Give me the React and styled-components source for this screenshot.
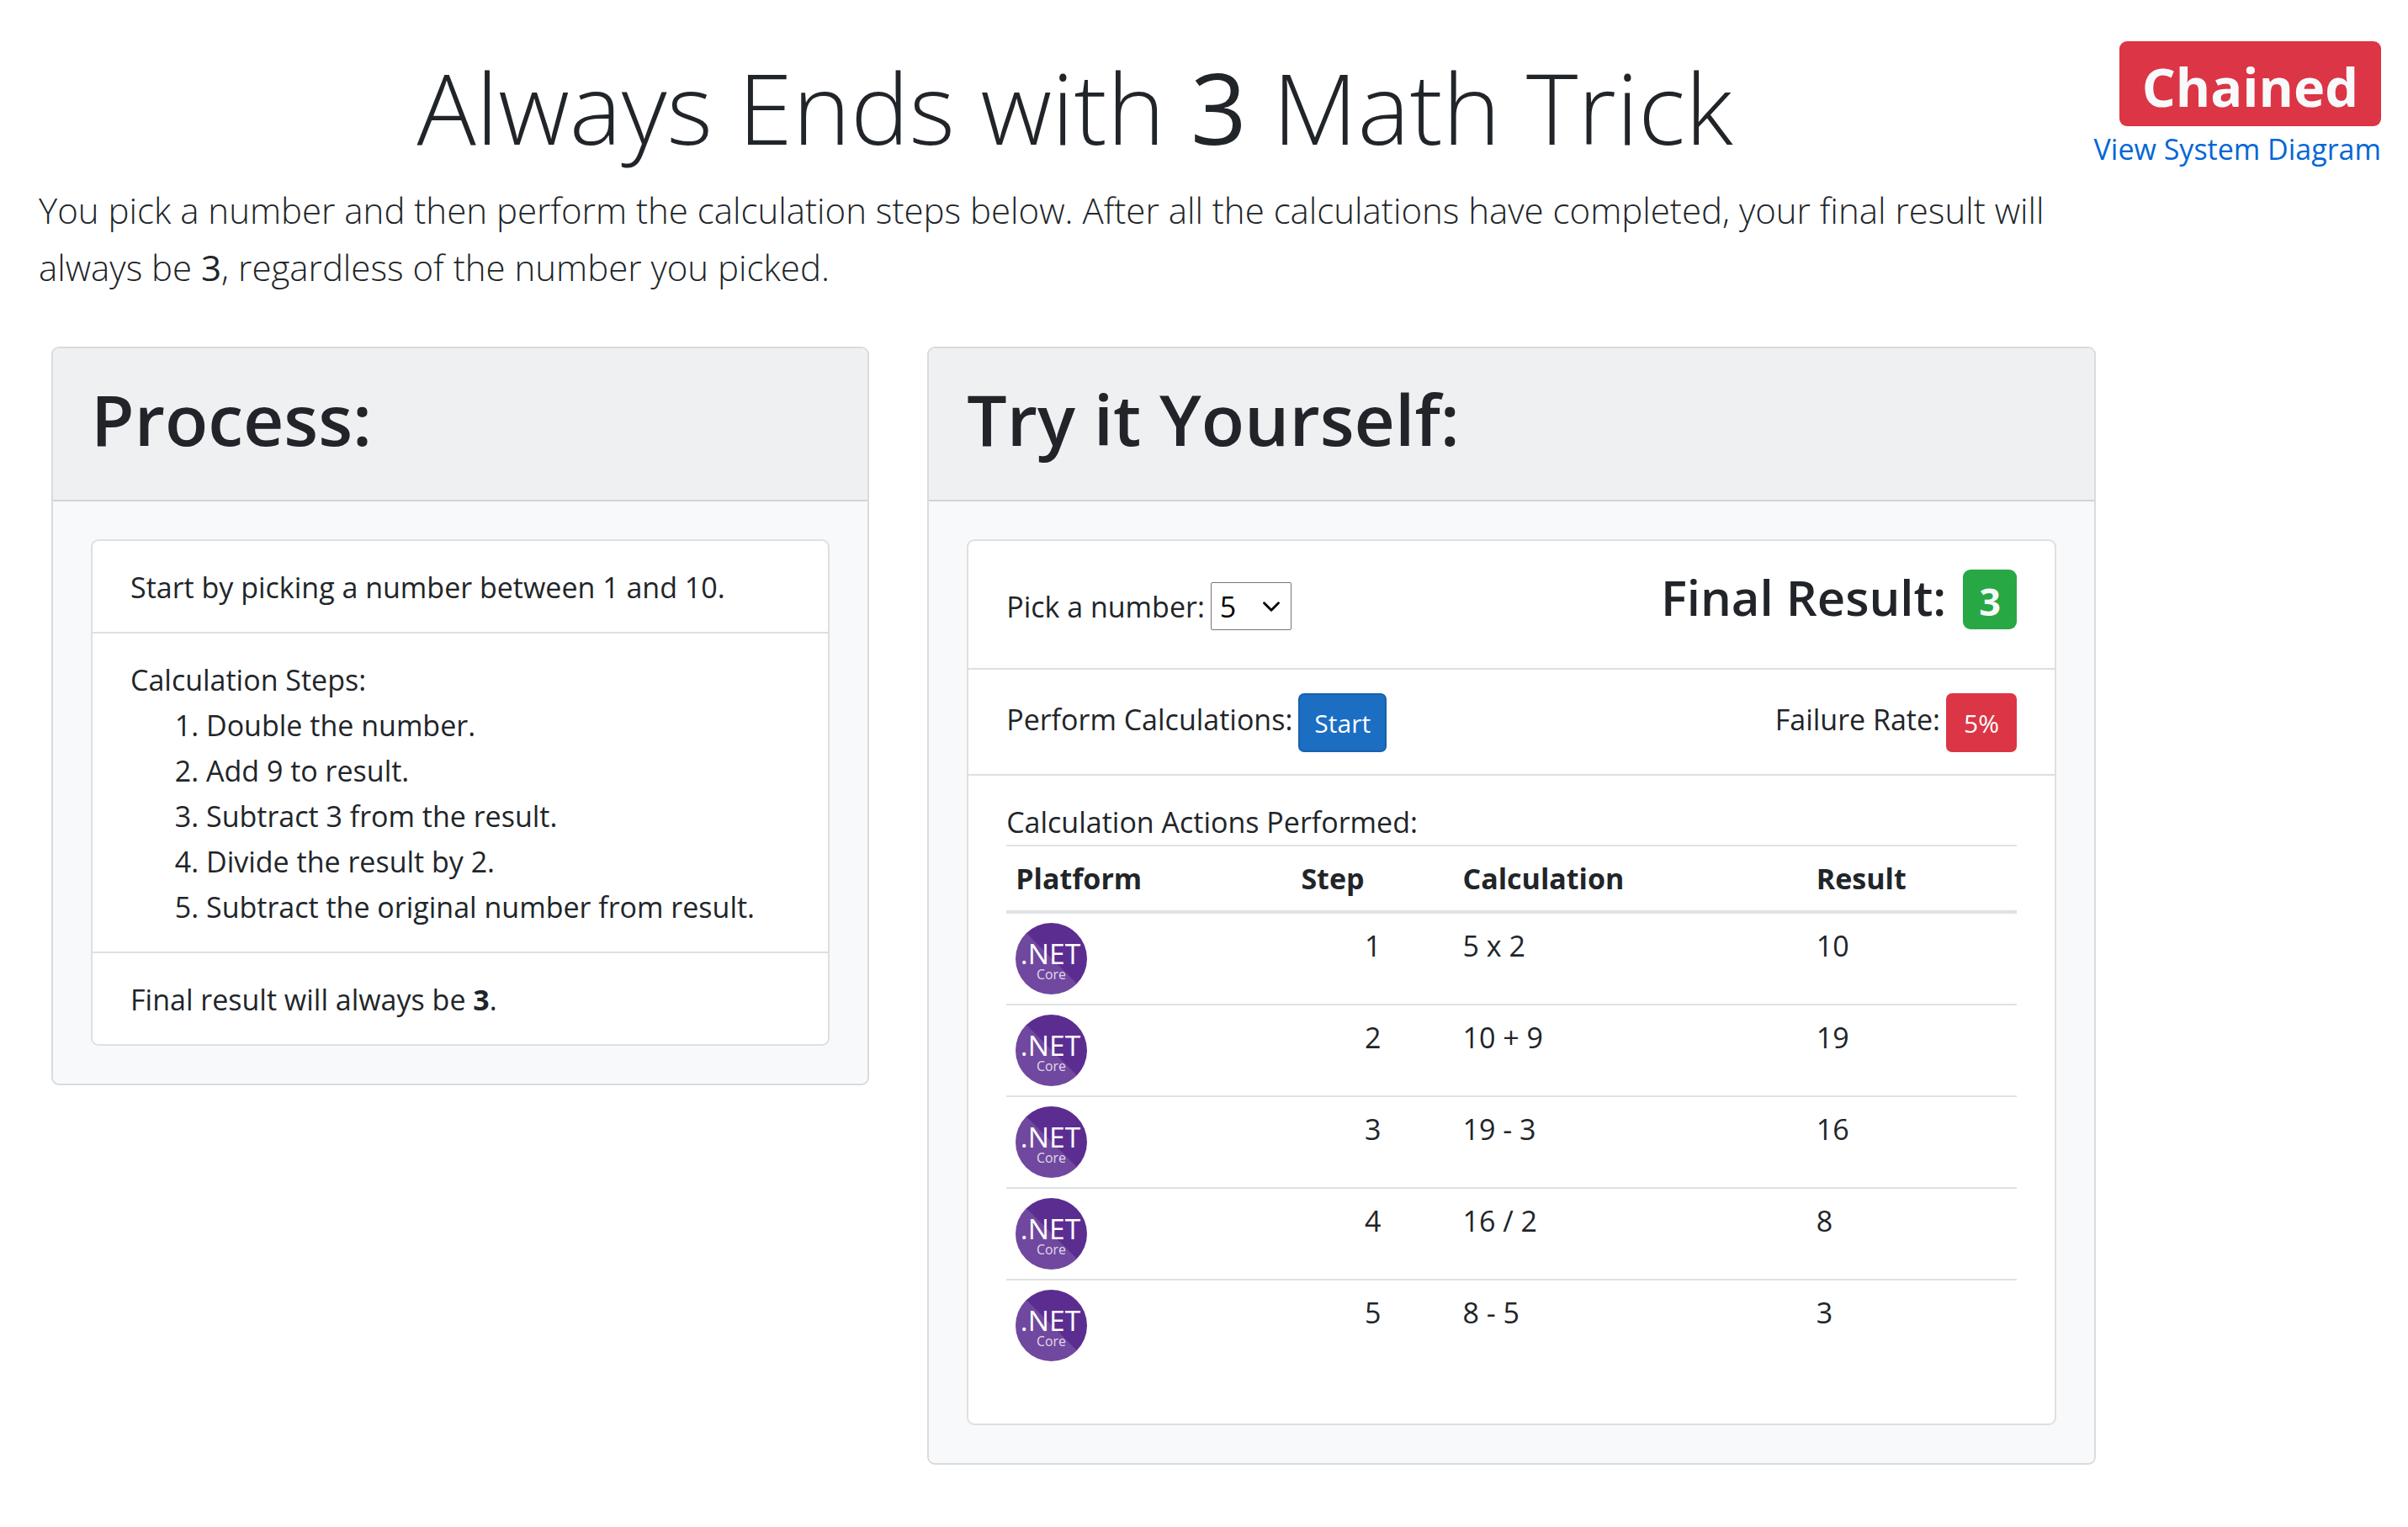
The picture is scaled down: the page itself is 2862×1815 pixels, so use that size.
import React, { useState } from "react";
import styled, { createGlobalStyle } from "styled-components";
import { ChevronDown } from "lucide-react";

const GlobalStyle = createGlobalStyle`
  *, *::before, *::after { box-sizing: border-box; }
  body {
    margin: 0;
    background: #fff;
    color: #212529;
    font-family: "Segoe UI", "Open Sans", "Noto Sans", sans-serif;
    font-size: 34px;
    line-height: 54px;
  }
`;

const Page = styled.main`
  padding: 49px 32px 48px 46px;
`;

const Top = styled.header`
  display: grid;
  grid-template-columns: minmax(0, 1fr) 321px;
  align-items: start;
  margin-bottom: 60px;
`;

const Title = styled.h1`
  margin: 2px 0 13px;
  font-size: 117px;
  font-weight: 300;
  line-height: 152px;
  text-align: center;

  strong { font-weight: 500; }
`;

const Lead = styled.p`
  margin: 0;
  font-size: 42px;
  font-weight: 300;
  line-height: 68px;

  strong { font-weight: 500; }
`;

const Mode = styled.div`
  display: flex;
  flex-direction: column;
  align-items: flex-end;
  white-space: nowrap;
`;

const Badge = styled.span`
  display: inline-block;
  padding: ${(p) => (p.$large ? "20px 27px 14px" : "14px 19px 10px")};
  border-radius: 9px;
  background: ${(p) => (p.$tone === "danger" ? "#dc3545" : "#28a745")};
  color: #f8f9fa;
  font-size: ${(p) => (p.$large ? "63px" : "45px")};
  font-weight: 700;
  line-height: ${(p) => (p.$large ? "67px" : "47px")};
`;

const DiagramLink = styled.a`
  color: #0366d6;
  text-decoration: none;
`;

const Cards = styled.div`
  display: grid;
  grid-template-columns: 7fr 10fr;
  align-items: start;
  gap: 69px;
  padding: 0 339px 0 15px;
`;

const Card = styled.section`
  border: 2px solid #d9dbdd;
  border-radius: 9px;
  background: #f8f9fa;
  overflow: hidden;
`;

const CardHeader = styled.div`
  padding: 29px 45px 42px;
  border-bottom: 2px solid #d2d3d5;
  background: #eff0f2;
`;

const CardTitle = styled.h2`
  margin: 0;
  font-size: 84px;
  font-weight: 600;
  line-height: 109px;
`;

const Panel = styled.ul`
  margin: 45px;
  padding: 0;
  border: 2px solid #dfdfdf;
  border-radius: 9px;
  background: #fff;
  list-style: none;
`;

const PanelItem = styled.li`
  padding: 28px 45px 26px;

  & + & { border-top: 2px solid #dfdfdf; }
`;

const ControlRow = styled(PanelItem)`
  display: flex;
  justify-content: space-between;
  align-items: ${(p) => (p.$top ? "flex-start" : "center")};
`;

const Control = styled.div`
  display: flex;
  align-items: center;
  gap: 7px;
`;

const PickControl = styled(Control)`
  margin: 21px 0 19px;
`;

const RaisedLabel = styled.span`
  padding-bottom: 8px;
`;

const Steps = styled.ol`
  margin: 0;
  padding-left: 90px;
`;

const SelectBox = styled.span`
  display: inline-grid;
  align-items: center;
  justify-items: end;

  & > * { grid-area: 1 / 1; }

  svg { margin-right: 7px; pointer-events: none; }
`;

const Select = styled.select`
  appearance: none;
  width: 96px;
  height: 57px;
  padding: 0 10px;
  border: 1px solid #767676;
  border-radius: 2px;
  background: #fff;
  color: #000;
  font: inherit;
`;

const FinalResult = styled.h3`
  display: flex;
  align-items: baseline;
  gap: 20px;
  margin: 3px 0 18px;
  font-size: 58px;
  font-weight: 600;
  line-height: 71px;
`;

const Button = styled.button`
  min-width: 84px;
  height: 70px;
  padding: 0 17px;
  border: 2px solid ${(p) => (p.$tone === "danger" ? "#dc3545" : "#1861ac")};
  border-radius: 7px;
  background: ${(p) => (p.$tone === "danger" ? "#dc3545" : "#1b6ec2")};
  color: #fff;
  font: inherit;
  font-size: 30px;
  line-height: 47px;
`;

const ActionsItem = styled(PanelItem)`
  padding-bottom: 63px;
`;

const Table = styled.table`
  width: 100%;
  table-layout: fixed;
  border-collapse: collapse;

  caption { padding: 0; text-align: left; }
`;

const HeadCell = styled.th`
  width: ${(p) => p.$width};
  padding: 11px;
  border-top: 2px solid #dee2e6;
  border-bottom: 4px solid #dee2e6;
  font-weight: 700;
  text-align: left;
`;

const Cell = styled.td`
  padding: 11px ${(p) => (p.$numeric ? "86px" : "11px")} 11px 11px;
  border-top: 2px solid #dee2e6;
  text-align: ${(p) => (p.$numeric ? "right" : "left")};
  vertical-align: top;
`;

const LogoSvg = styled.svg`
  display: block;
  width: 85px;
  height: 85px;
`;

const Logo = () => (
  <LogoSvg viewBox="0 0 86 86" role="img" aria-label=".NET Core">
    <circle cx="43" cy="43" r="43" fill="#5c2d91" />
    <path d="M13 12.2A43 43 0 1 0 73.8 73Z" fill="#fff" fillOpacity="0.13" />
    <text x="42" y="50" fill="#fff" fontSize="34" textAnchor="middle">.NET</text>
    <text x="43" y="68" fill="#fff" fillOpacity="0.8" fontSize="16" textAnchor="middle">Core</text>
  </LogoSvg>
);

const STEPS = [
  "Double the number.",
  "Add 9 to result.",
  "Subtract 3 from the result.",
  "Divide the result by 2.",
  "Subtract the original number from result.",
];

const ACTIONS = [
  { step: 1, calculation: "5 x 2", result: 10 },
  { step: 2, calculation: "10 + 9", result: 19 },
  { step: 3, calculation: "19 - 3", result: 16 },
  { step: 4, calculation: "16 / 2", result: 8 },
  { step: 5, calculation: "8 - 5", result: 3 },
];

const NUMBERS = [1, 2, 3, 4, 5, 6, 7, 8, 9, 10];

export default function App() {
  const [number, setNumber] = useState(5);

  return (
    <>
      <GlobalStyle />
      <Page>
        <Top>
          <div>
            <Title>Always Ends with <strong>3</strong> Math Trick</Title>
            <Lead>
              You pick a number and then perform the calculation steps below. After all the
              calculations have completed, your final result will always be{" "}
              <strong>3</strong>, regardless of the number you picked.
            </Lead>
          </div>
          <Mode>
            <Badge $large $tone="danger">Chained</Badge>
            <DiagramLink href="#diagram">View System Diagram</DiagramLink>
          </Mode>
        </Top>

        <Cards>
          <Card>
            <CardHeader><CardTitle>Process:</CardTitle></CardHeader>
            <Panel>
              <PanelItem>Start by picking a number between 1 and 10.</PanelItem>
              <PanelItem>
                Calculation Steps:
                <Steps>
                  {STEPS.map((text) => <li key={text}>{text}</li>)}
                </Steps>
              </PanelItem>
              <PanelItem>Final result will always be <b>3</b>.</PanelItem>
            </Panel>
          </Card>

          <Card>
            <CardHeader><CardTitle>Try it Yourself:</CardTitle></CardHeader>
            <Panel>
              <ControlRow $top>
                <PickControl>
                  <label htmlFor="number">Pick a number:</label>
                  <SelectBox>
                    <Select
                      id="number"
                      value={number}
                      onChange={(e) => setNumber(Number(e.target.value))}
                    >
                      {NUMBERS.map((n) => <option key={n} value={n}>{n}</option>)}
                    </Select>
                    <ChevronDown size={34} strokeWidth={2} color="#000" aria-hidden="true" />
                  </SelectBox>
                </PickControl>
                <FinalResult>
                  Final Result: <Badge $tone="success">3</Badge>
                </FinalResult>
              </ControlRow>
              <ControlRow>
                <Control>
                  <RaisedLabel>Perform Calculations:</RaisedLabel>
                  <Button type="button">Start</Button>
                </Control>
                <Control>
                  <RaisedLabel>Failure Rate:</RaisedLabel>
                  <Button type="button" $tone="danger">5%</Button>
                </Control>
              </ControlRow>
              <ActionsItem>
                <Table>
                  <caption>Calculation Actions Performed:</caption>
                  <thead>
                    <tr>
                      <HeadCell $width="28.25%">Platform</HeadCell>
                      <HeadCell $width="16%">Step</HeadCell>
                      <HeadCell $width="35%">Calculation</HeadCell>
                      <HeadCell>Result</HeadCell>
                    </tr>
                  </thead>
                  <tbody>
                    {ACTIONS.map((row) => (
                      <tr key={row.step}>
                        <Cell><Logo /></Cell>
                        <Cell $numeric>{row.step}</Cell>
                        <Cell>{row.calculation}</Cell>
                        <Cell>{row.result}</Cell>
                      </tr>
                    ))}
                  </tbody>
                </Table>
              </ActionsItem>
            </Panel>
          </Card>
        </Cards>
      </Page>
    </>
  );
}
